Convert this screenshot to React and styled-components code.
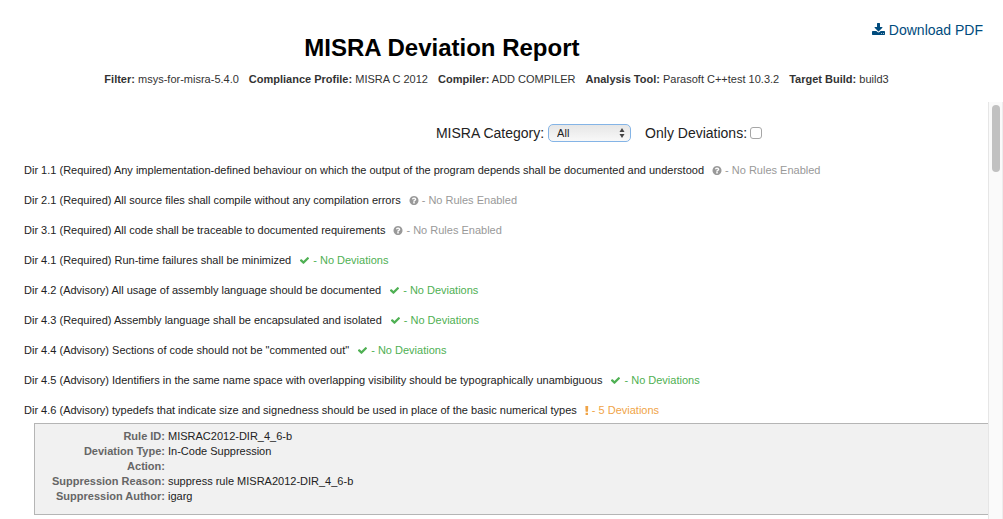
import { useState } from "react"
import styled, { createGlobalStyle } from "styled-components"

const info = [
    { name: "Filter", value: "msys-for-misra-5.4.0" },
    { name: "Compliance Profile", value: "MISRA C 2012" },
    { name: "Compiler", value: "ADD COMPILER" },
    { name: "Analysis Tool", value: "Parasoft C++test 10.3.2" },
    { name: "Target Build", value: "build3" },
]

const rules = [
    { id: "Dir 1.1", category: "Required", text: "Any implementation-defined behaviour on which the output of the program depends shall be documented and understood", status: "disabled" },
    { id: "Dir 2.1", category: "Required", text: "All source files shall compile without any compilation errors", status: "disabled" },
    { id: "Dir 3.1", category: "Required", text: "All code shall be traceable to documented requirements", status: "disabled" },
    { id: "Dir 4.1", category: "Required", text: "Run-time failures shall be minimized", status: "ok" },
    { id: "Dir 4.2", category: "Advisory", text: "All usage of assembly language should be documented", status: "ok" },
    { id: "Dir 4.3", category: "Required", text: "Assembly language shall be encapsulated and isolated", status: "ok" },
    { id: "Dir 4.4", category: "Advisory", text: "Sections of code should not be \"commented out\"", status: "ok" },
    { id: "Dir 4.5", category: "Advisory", text: "Identifiers in the same name space with overlapping visibility should be typographically unambiguous", status: "ok" },
    {
        id: "Dir 4.6",
        category: "Advisory",
        text: "typedefs that indicate size and signedness should be used in place of the basic numerical types",
        status: "deviation",
        count: 5,
        details: [
            ["Rule ID", "MISRAC2012-DIR_4_6-b"],
            ["Deviation Type", "In-Code Suppression"],
            ["Action", ""],
            ["Suppression Reason", "suppress rule MISRA2012-DIR_4_6-b"],
            ["Suppression Author", "igarg"],
        ],
    },
]

const colors = {
    disabled: "#999999",
    ok: "#4fb053",
    deviation: "#f0a447",
}

const icons = {
    disabled: {
        width: 10,
        box: "128 128 1536 1536",
        path: "M1024 1376v-192q0-14-9-23t-23-9h-192q-14 0-23 9t-9 23v192q0 14 9 23t23 9h192q14 0 23-9t9-23zm256-672q0-88-55.5-163t-138.5-116-170-41q-243 0-371 213-15 24 8 42l132 100q7 6 19 6 16 0 25-12 53-68 86-92 34-24 86-24 48 0 85.5 26t37.5 59q0 38-20 61t-68 45q-63 28-115.5 86.5t-52.5 125.5v36q0 14 9 23t23 9h192q14 0 23-9t9-23q0-19 21.5-49.5t54.5-49.5q32-18 49-28.5t46-35 44.5-48 28-60.5 12.5-81zm384 192q0 209-103 385.5t-279.5 279.5-385.5 103-385.5-103-279.5-279.5-103-385.5 103-385.5 279.5-279.5 385.5-103 385.5 103 279.5 279.5 103 385.5z",
    },
    ok: {
        width: 11,
        box: "50 160 1692 1536",
        path: "M1671 566q0 40-28 68l-724 724-136 136q-28 28-68 28t-68-28l-136-136-362-362q-28-28-28-68t28-68l136-136q28-28 68-28t68 28l294 295 656-657q28-28 68-28t68 28l136 136q28 28 28 68z",
    },
    deviation: {
        width: 4,
        box: "674 128 512 1408",
        path: "M1088 1248v224q0 26-19 45t-45 19h-256q-26 0-45-19t-19-45v-224q0-26 19-45t45-19h256q26 0 45 19t19 45zm30-1056l-28 768q-1 26-20.5 45t-45.5 19h-256q-26 0-45.5-19t-20.5-45l-28-768q-1-26 17.5-45t44.5-19h320q26 0 44.5 19t17.5 45z",
    },
}

function statusText(rule) {
    if (rule.status === "disabled") return "No Rules Enabled"
    if (rule.status === "ok") return "No Deviations"
    return `${rule.count} Deviations`
}

function Rule({ rule }) {
    const icon = icons[rule.status]

    return (
        <Item>
            <Line>
                {rule.id} ({rule.category}) {rule.text}
                <Status $color={colors[rule.status]}>
                    <StatusIcon $width={icon.width} viewBox={icon.box} aria-hidden="true">
                        <path d={icon.path} />
                    </StatusIcon>
                    - {statusText(rule)}
                </Status>
            </Line>
            {rule.details && (
                <Details>
                    {rule.details.map(([label, value]) => (
                        <DetailRow key={label}>
                            <dt>{label}:</dt>
                            <dd>{value}</dd>
                        </DetailRow>
                    ))}
                </Details>
            )}
        </Item>
    )
}

export default function App() {
    const [category, setCategory] = useState("All")
    const [onlyDeviations, setOnlyDeviations] = useState(false)

    const visible = rules.filter(rule =>
        (category === "All" || rule.category === category) &&
        (!onlyDeviations || rule.status === "deviation")
    )

    return (
        <Page>
            <GlobalStyle />
            <Header>
                <Title>MISRA Deviation Report</Title>
                <Download href="#pdf">
                    <svg viewBox="0 0 1664 1536" aria-hidden="true">
                        <path d="M1280 1344q0-26-19-45t-45-19-45 19-19 45 19 45 45 19 45-19 19-45zm256 0q0-26-19-45t-45-19-45 19-19 45 19 45 45 19 45-19 19-45zm128-224v320q0 40-28 68t-68 28h-1472q-40 0-68-28t-28-68v-320q0-40 28-68t68-28h465l135 136q58 56 136 56t136-56l136-136h464q40 0 68 28t28 68zm-325-569q17 41-14 70l-448 448q-18 19-45 19t-45-19l-448-448q-31-29-14-70 17-39 59-39h256v-448q0-26 19-45t45-19h256q26 0 45 19t19 45v448h256q42 0 59 39z" />
                    </svg>
                    Download PDF
                </Download>
            </Header>
            <Info>
                {info.map(item => (
                    <span key={item.name}><b>{item.name}:</b> {item.value}</span>
                ))}
            </Info>
            <Body>
                <Report>
                    <Filters>
                        <label htmlFor="category">MISRA Category:</label>
                        <SelectBox>
                            <Select id="category" value={category} onChange={e => setCategory(e.target.value)}>
                                <option>All</option>
                                <option>Mandatory</option>
                                <option>Required</option>
                                <option>Advisory</option>
                            </Select>
                            <Arrows viewBox="0 0 6 10" aria-hidden="true">
                                <path d="M3 0L5.5 4H0.5zM3 10L0.5 6H5.5z" />
                            </Arrows>
                        </SelectBox>
                        <label htmlFor="only">Only Deviations:</label>
                        <Checkbox id="only" type="checkbox" checked={onlyDeviations} onChange={e => setOnlyDeviations(e.target.checked)} />
                    </Filters>
                    <List>
                        {visible.map(rule => <Rule key={rule.id} rule={rule} />)}
                    </List>
                </Report>
                <Scrollbar><Thumb /></Scrollbar>
            </Body>
        </Page>
    )
}

const GlobalStyle = createGlobalStyle`
    body{
        margin: 0;
        background-color: #FFFFFF;
        color: #222222;
        font-family: "Liberation Sans", Arial, sans-serif;
        font-size: 11px;
        line-height: 15px;
    }
`

const Page = styled.div`
    display: flex;
    flex-direction: column;
    height: 100vh;
    overflow: hidden;
`

const Header = styled.header`
    display: flex;
    align-items: flex-start;
    padding-top: 20px;
    padding-right: 20px;
`

const Title = styled.h1`
    flex: 1;
    margin: 0;
    padding-top: 14px;
    padding-left: 12px;
    font-size: 24px;
    line-height: 28px;
    text-align: center;
    color: #000000;
`

const Download = styled.a`
    display: flex;
    align-items: center;
    gap: 4px;
    font-size: 14px;
    line-height: 20px;
    color: #004b7d;
    text-decoration: none;

    svg{
        width: 13px;
        height: 12px;
        margin-bottom: 2px;
        fill: currentColor;
    }
`

const Info = styled.div`
    display: flex;
    flex-wrap: wrap;
    justify-content: center;
    column-gap: 10px;
    padding: 10px 10px 15px 0;
    color: #333333;
`

const Body = styled.div`
    display: flex;
    flex: 1;
    min-height: 0;
`

const Report = styled.main`
    flex: 1;
    min-width: 0;
    overflow: hidden;
`

const Filters = styled.div`
    display: flex;
    justify-content: center;
    align-items: center;
    padding: 20px 0 19px 210px;
    font-size: 14px;
    line-height: 22px;
`

const SelectBox = styled.div`
    position: relative;
    display: flex;
    width: 83px;
    margin: 0 14px 0 4px;
`

const Select = styled.select`
    appearance: none;
    width: 100%;
    height: 18px;
    padding: 0 16px 0 8px;
    border: 1px solid #84b4e6;
    border-radius: 5px;
    background: linear-gradient(#e6e6e6, #f8f8f8);
    color: #222222;
    font-family: inherit;
    font-size: 11px;
`

const Arrows = styled.svg`
    position: absolute;
    top: 4px;
    right: 6px;
    width: 6px;
    height: 10px;
    fill: #444444;
    pointer-events: none;
`

const Checkbox = styled.input`
    appearance: none;
    width: 12px;
    height: 12px;
    margin: 0 0 0 3px;
    border: 1px solid #a6a6a6;
    border-radius: 3px;
    background-color: #FFFFFF;

    &:checked{
        background-color: #84b4e6;
    }
`

const List = styled.ul`
    margin: 0;
    padding: 0 0 0 24px;
    list-style: none;
`

const Item = styled.li`
    margin-bottom: 15px;
`

const Line = styled.div`
    display: flex;
    white-space: pre;
`

const Status = styled.span`
    display: flex;
    align-items: center;
    margin-left: 8px;
    color: ${ props => props.$color};
`

const StatusIcon = styled.svg`
    width: ${ props => props.$width}px;
    height: 9px;
    margin-right: 3px;
    fill: currentColor;
`

const Details = styled.dl`
    margin: 5px 0 0 10px;
    padding: 5px 0 10px;
    border: 1px solid #b5b5b5;
    border-right: none;
    background-color: #f1f1f1;
`

const DetailRow = styled.div`
    display: grid;
    grid-template-columns: 130px 1fr;
    column-gap: 3px;

    dt{
        font-weight: 700;
        text-align: right;
        color: #666666;
    }

    dd{
        margin: 0;
    }
`

const Scrollbar = styled.div`
    width: 13px;
    padding-top: 3px;
    border-left: 1px solid #e6e6e6;
    border-right: 1px solid #ededed;
    background-color: #fafafa;
`

const Thumb = styled.div`
    width: 8px;
    height: 67px;
    margin: 0 auto;
    border-radius: 4px;
    background-color: #c1c1c1;
`
